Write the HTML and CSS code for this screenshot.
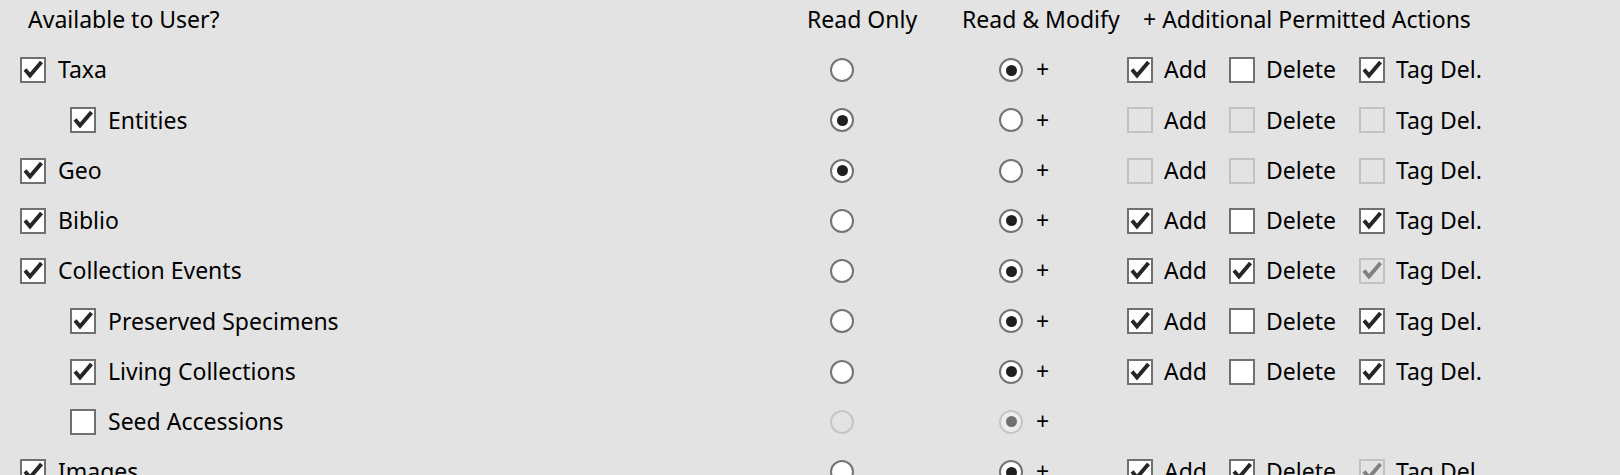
FILE: index.html
```html
<!DOCTYPE html>
<html lang="en">
<head>
  <meta charset="UTF-8" />
  <title>User Permissions</title>
  <link rel="stylesheet" href="styles.css">
</head>
<body>
  <div class="perm-table">
    <div class="perm-row head">
      <div class="col-name">Available to User?</div>
      <div class="col-ro">Read Only</div>
      <div class="col-rm">Read &amp; Modify</div>
      <div class="col-act">+ Additional Permitted Actions</div>
    </div>

    <!-- Taxa -->
    <div class="perm-row">
      <div class="col-name"><span class="box on"><svg viewBox="0 0 26 26"><polyline points="5,12.5 10,18.5 21.5,5"/></svg></span>Taxa</div>
      <div class="col-ro"><span class="radio"></span></div>
      <div class="col-rm"><span class="radio on"></span><span class="plus">+</span></div>
      <div class="col-act">
        <span class="act add"><span class="box on"><svg viewBox="0 0 26 26"><polyline points="5,12.5 10,18.5 21.5,5"/></svg></span>Add</span>
        <span class="act del"><span class="box"></span>Delete</span>
        <span class="act"><span class="box on"><svg viewBox="0 0 26 26"><polyline points="5,12.5 10,18.5 21.5,5"/></svg></span>Tag Del.</span>
      </div>
    </div>

    <div class="perm-row child">
      <div class="col-name"><span class="box on"><svg viewBox="0 0 26 26"><polyline points="5,12.5 10,18.5 21.5,5"/></svg></span>Entities</div>
      <div class="col-ro"><span class="radio on"></span></div>
      <div class="col-rm"><span class="radio"></span><span class="plus">+</span></div>
      <div class="col-act">
        <span class="act add"><span class="box off"></span>Add</span>
        <span class="act del"><span class="box off"></span>Delete</span>
        <span class="act"><span class="box off"></span>Tag Del.</span>
      </div>
    </div>

    <!-- Geo -->
    <div class="perm-row">
      <div class="col-name"><span class="box on"><svg viewBox="0 0 26 26"><polyline points="5,12.5 10,18.5 21.5,5"/></svg></span>Geo</div>
      <div class="col-ro"><span class="radio on"></span></div>
      <div class="col-rm"><span class="radio"></span><span class="plus">+</span></div>
      <div class="col-act">
        <span class="act add"><span class="box off"></span>Add</span>
        <span class="act del"><span class="box off"></span>Delete</span>
        <span class="act"><span class="box off"></span>Tag Del.</span>
      </div>
    </div>

    <!-- Biblio -->
    <div class="perm-row">
      <div class="col-name"><span class="box on"><svg viewBox="0 0 26 26"><polyline points="5,12.5 10,18.5 21.5,5"/></svg></span>Biblio</div>
      <div class="col-ro"><span class="radio"></span></div>
      <div class="col-rm"><span class="radio on"></span><span class="plus">+</span></div>
      <div class="col-act">
        <span class="act add"><span class="box on"><svg viewBox="0 0 26 26"><polyline points="5,12.5 10,18.5 21.5,5"/></svg></span>Add</span>
        <span class="act del"><span class="box"></span>Delete</span>
        <span class="act"><span class="box on"><svg viewBox="0 0 26 26"><polyline points="5,12.5 10,18.5 21.5,5"/></svg></span>Tag Del.</span>
      </div>
    </div>

    <!-- Collection Events -->
    <div class="perm-row">
      <div class="col-name"><span class="box on"><svg viewBox="0 0 26 26"><polyline points="5,12.5 10,18.5 21.5,5"/></svg></span>Collection Events</div>
      <div class="col-ro"><span class="radio"></span></div>
      <div class="col-rm"><span class="radio on"></span><span class="plus">+</span></div>
      <div class="col-act">
        <span class="act add"><span class="box on"><svg viewBox="0 0 26 26"><polyline points="5,12.5 10,18.5 21.5,5"/></svg></span>Add</span>
        <span class="act del"><span class="box on"><svg viewBox="0 0 26 26"><polyline points="5,12.5 10,18.5 21.5,5"/></svg></span>Delete</span>
        <span class="act"><span class="box off on"><svg viewBox="0 0 26 26"><polyline points="5,12.5 10,18.5 21.5,5"/></svg></span>Tag Del.</span>
      </div>
    </div>

    <div class="perm-row child">
      <div class="col-name"><span class="box on"><svg viewBox="0 0 26 26"><polyline points="5,12.5 10,18.5 21.5,5"/></svg></span>Preserved Specimens</div>
      <div class="col-ro"><span class="radio"></span></div>
      <div class="col-rm"><span class="radio on"></span><span class="plus">+</span></div>
      <div class="col-act">
        <span class="act add"><span class="box on"><svg viewBox="0 0 26 26"><polyline points="5,12.5 10,18.5 21.5,5"/></svg></span>Add</span>
        <span class="act del"><span class="box"></span>Delete</span>
        <span class="act"><span class="box on"><svg viewBox="0 0 26 26"><polyline points="5,12.5 10,18.5 21.5,5"/></svg></span>Tag Del.</span>
      </div>
    </div>

    <div class="perm-row child">
      <div class="col-name"><span class="box on"><svg viewBox="0 0 26 26"><polyline points="5,12.5 10,18.5 21.5,5"/></svg></span>Living Collections</div>
      <div class="col-ro"><span class="radio"></span></div>
      <div class="col-rm"><span class="radio on"></span><span class="plus">+</span></div>
      <div class="col-act">
        <span class="act add"><span class="box on"><svg viewBox="0 0 26 26"><polyline points="5,12.5 10,18.5 21.5,5"/></svg></span>Add</span>
        <span class="act del"><span class="box"></span>Delete</span>
        <span class="act"><span class="box on"><svg viewBox="0 0 26 26"><polyline points="5,12.5 10,18.5 21.5,5"/></svg></span>Tag Del.</span>
      </div>
    </div>

    <div class="perm-row child">
      <div class="col-name"><span class="box"></span>Seed Accessions</div>
      <div class="col-ro"><span class="radio off"></span></div>
      <div class="col-rm"><span class="radio off on"></span><span class="plus">+</span></div>
      <div class="col-act"></div>
    </div>

    <!-- Images -->
    <div class="perm-row">
      <div class="col-name"><span class="box on"><svg viewBox="0 0 26 26"><polyline points="5,12.5 10,18.5 21.5,5"/></svg></span>Images</div>
      <div class="col-ro"><span class="radio"></span></div>
      <div class="col-rm"><span class="radio on"></span><span class="plus">+</span></div>
      <div class="col-act">
        <span class="act add"><span class="box on"><svg viewBox="0 0 26 26"><polyline points="5,12.5 10,18.5 21.5,5"/></svg></span>Add</span>
        <span class="act del"><span class="box on"><svg viewBox="0 0 26 26"><polyline points="5,12.5 10,18.5 21.5,5"/></svg></span>Delete</span>
        <span class="act"><span class="box off on"><svg viewBox="0 0 26 26"><polyline points="5,12.5 10,18.5 21.5,5"/></svg></span>Tag Del.</span>
      </div>
    </div>
  </div>
</body>
</html>
```
FILE: styles.css
```css
* { box-sizing: border-box; }

body {
  margin: 0;
  background: #e3e3e3;
  color: #000;
  font-family: 'Noto Sans', sans-serif;
  font-size: 23px;
  line-height: 1.2;
  overflow: hidden;
}

.perm-table {
  padding-left: 20px;
}

.perm-row {
  display: grid;
  grid-template-columns: 787px 155px 165px 1fr;
  align-items: center;
  height: 50.25px;
}

.perm-row.head {
  height: 45px;
  padding-bottom: 6px;
}

.perm-row > div {
  display: flex;
  align-items: center;
}

.head .col-name { padding-left: 8px; }
.head .col-ro { padding-left: 0; }
.head .col-rm { padding-left: 0; }
.head .col-act { padding-left: 16px; }

.col-name { gap: 12px; }
.child .col-name { padding-left: 50px; }

.col-ro { padding-left: 23px; }
.col-rm { padding-left: 37px; gap: 13px; }

/* checkbox */
.box {
  width: 26px;
  height: 26px;
  flex: none;
  border: 2px solid #707070;
  background: #fff;
  display: inline-block;
}

.box svg {
  display: block;
  width: 26px;
  height: 26px;
  margin: -2px;
  fill: none;
  stroke: #262626;
  stroke-width: 4;
}

.box.off {
  border-color: #c2c2c2;
  background: transparent;
}

.box.off svg { stroke: #808080; }

/* radio */
.radio {
  width: 24px;
  height: 24px;
  flex: none;
  border: 2px solid #747474;
  border-radius: 50%;
  background: #fff;
  position: relative;
}

.radio.on::after {
  content: "";
  position: absolute;
  left: 4.5px;
  top: 4.5px;
  width: 11px;
  height: 11px;
  border-radius: 50%;
  background: #1f1f1f;
}

.radio.off {
  border-color: #c6c6c6;
  background: transparent;
}

.radio.off.on { background: #ededed; }
.radio.off.on::after { background: #707070; }

/* action checkboxes */
.act {
  display: inline-flex;
  align-items: center;
  gap: 11px;
}

.act.add { width: 102px; }
.act.del { width: 130px; }
```
